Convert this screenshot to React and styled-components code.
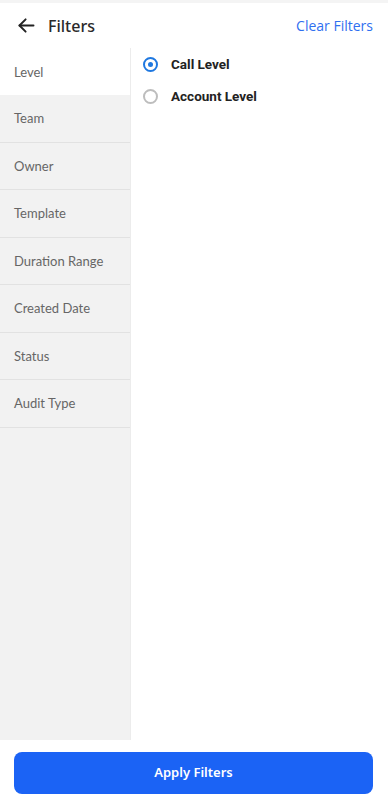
import React from 'react'
import styled, { createGlobalStyle } from 'styled-components'

const Global = createGlobalStyle`
  body {
    margin: 0;
    background: #fff;
    font-family: Lato, "Open Sans", sans-serif;
  }
`

const Page = styled.div`
  width: 388px;
  height: 800px;
  display: flex;
  flex-direction: column;
  border-top: 3px solid #f4f4f4;
  box-sizing: border-box;
`

const Header = styled.div`
  height: 45px;
  display: flex;
  align-items: center;
  padding: 0 15px 0 16px;
`

const BackButton = styled.button`
  border: 0;
  background: none;
  padding: 0;
  display: flex;
  color: #222;
  cursor: pointer;
`

const Title = styled.div`
  margin-left: 11px;
  font-family: "Noto Sans", sans-serif;
  font-size: 16px;
  font-weight: 500;
  color: #2a2a2a;
  flex: 1;
`

const ClearLink = styled.a`
  font-size: 14px;
  color: #2f6ff0;
  font-family: "Open Sans", sans-serif;
`

const Body = styled.div`
  flex: 1;
  display: flex;
`

const Sidebar = styled.div`
  width: 131px;
  flex-shrink: 0;
  background: #f2f2f2;
  border-right: 1px solid #ececec;
  box-sizing: border-box;
`

const NavItem = styled.div`
  height: ${p => (p.active ? '47px' : '47.5px')};
  box-sizing: border-box;
  display: flex;
  align-items: center;
  padding-left: 14px;
  font-size: 13px;
  color: #666;
  background: ${p => (p.active ? '#fff' : 'transparent')};
  border-bottom: ${p => (p.active ? 'none' : '1px solid #e2e2e2')};
`

const Options = styled.div`
  flex: 1;
  padding-left: 12px;
`

const OptionRow = styled.label`
  height: 32px;
  display: flex;
  align-items: center;
  gap: 13px;
  font-family: Roboto, sans-serif;
  font-weight: 700;
  font-size: 13.5px;
  color: #222;
`

const Radio = styled.span`
  width: 15px;
  height: 15px;
  box-sizing: border-box;
  border-radius: 50%;
  border: 2px solid ${p => (p.checked ? '#1f78e0' : '#bdbdbd')};
  display: flex;
  align-items: center;
  justify-content: center;

  &::after {
    content: '';
    width: 5px;
    height: 5px;
    border-radius: 50%;
    background: ${p => (p.checked ? '#1f78e0' : 'transparent')};
  }
`

const Footer = styled.div`
  height: 60px;
  padding: 12px 15px 0 14px;
  box-sizing: border-box;
`

const ApplyButton = styled.button`
  width: 100%;
  height: 42px;
  border: 0;
  border-radius: 8px;
  background: #1b63f5;
  color: #fff;
  font-family: "Noto Sans", sans-serif;
  font-size: 13px;
  font-weight: 600;
  padding-bottom: 4px;
`

const sections = ['Level', 'Team', 'Owner', 'Template', 'Duration Range', 'Created Date', 'Status', 'Audit Type']

const App = () => {
  return (
    <Page>
      <Global />
      <Header>
        <BackButton>
          <svg width="21" height="21" viewBox="0 0 24 24" fill="none" stroke="currentColor" strokeWidth="2.2" strokeLinecap="round" strokeLinejoin="round">
            <path d="M20 12H4" />
            <path d="M11 5l-7 7 7 7" />
          </svg>
        </BackButton>
        <Title>Filters</Title>
        <ClearLink>Clear Filters</ClearLink>
      </Header>
      <Body>
        <Sidebar>
          {sections.map((s, i) => (
            <NavItem key={s} active={i === 0}>{s}</NavItem>
          ))}
        </Sidebar>
        <Options>
          <OptionRow><Radio checked />Call Level</OptionRow>
          <OptionRow><Radio />Account Level</OptionRow>
        </Options>
      </Body>
      <Footer>
        <ApplyButton>Apply Filters</ApplyButton>
      </Footer>
    </Page>
  )
}

export default App
